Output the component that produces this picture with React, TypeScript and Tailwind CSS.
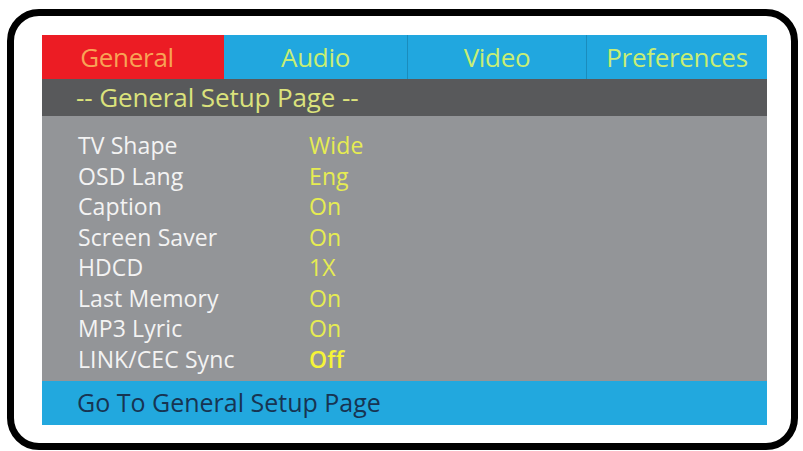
const tabs = [
  { name: "General", active: true, w: "w-[182px]" },
  { name: "Audio", active: false, w: "w-[183px]" },
  { name: "Video", active: false, w: "w-[179px]" },
  { name: "Preferences", active: false, w: "w-[181px]" },
];

const rows = [
  { label: "TV Shape", value: "Wide" },
  { label: "OSD Lang", value: "Eng" },
  { label: "Caption", value: "On" },
  { label: "Screen Saver", value: "On" },
  { label: "HDCD", value: "1X" },
  { label: "Last Memory", value: "On" },
  { label: "MP3 Lyric", value: "On" },
  { label: "LINK/CEC Sync", value: "Off", bright: true },
];

export default function App() {
  return (
    <div
      className="h-[451px] w-[803px] bg-white pl-[7px] pt-[9px] pr-[5px] pb-[1px]"
      style={{ fontFamily: '"Open Sans", "Noto Sans", sans-serif' }}
    >
      <div className="h-full w-full rounded-[32px] border-[7px] border-black pl-[28px] pt-[19px] pr-[22px] pb-[18px]">
        <div className="flex h-full w-[725px] flex-col">
          {/* Tabs */}
          <div className="flex h-[44px] bg-[#21a7df]">
            {tabs.map((t, i) => (
              <div
                key={t.name}
                className={`flex shrink-0 items-center justify-center text-[26px] tracking-[-0.3px] ${t.w} ${
                  t.active
                    ? "bg-[#ec1c24] text-[#f8a356] pr-[12px]"
                    : "text-[#c8ee74]"
                } ${i > 1 ? "border-l border-[#1a8cbd]" : ""}`}
              >
                {t.name}
              </div>
            ))}
          </div>

          {/* Page title */}
          <div className="flex h-[37px] items-center bg-[#58595b] pl-[34px] pb-[1px] text-[26px] tracking-[-0.1px] text-[#dbe27c]">
            -- General Setup Page --
          </div>

          {/* Settings */}
          <div className="flex flex-1 flex-col bg-[#939598] pl-[36px] pt-[14px]">
            {rows.map((r) => (
              <div key={r.label} className="flex h-[30.5px] items-center text-[23px] tracking-[0.1px]">
                <span className="w-[231px] shrink-0 text-[#f3f3f3]">{r.label}</span>
                <span
                  className={
                    r.bright
                      ? "font-semibold text-[#f5f438]"
                      : "text-[#e6ec52]"
                  }
                >
                  {r.value}
                </span>
              </div>
            ))}
          </div>

          {/* Footer */}
          <div className="flex h-[44px] items-center bg-[#22a8de] pl-[35px] text-[25px] text-[#173452]">
            Go To General Setup Page
          </div>
        </div>
      </div>
    </div>
  );
}
